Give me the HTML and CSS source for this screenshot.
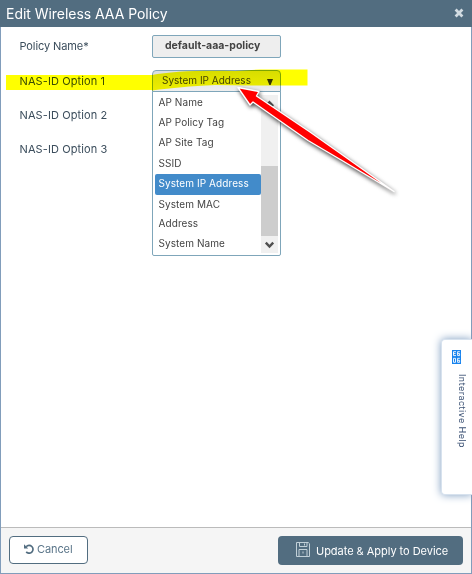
FILE: index.html
```html
<!DOCTYPE html>
<html lang="en">
<head>
<meta charset="utf-8">
<title>Edit Wireless AAA Policy</title>
<link rel="stylesheet" href="styles.css">
</head>
<body>
<div class="dialog">
  <header class="header">
    <h1 class="title">Edit Wireless AAA Policy</h1>
    <svg class="close" width="10" height="10" viewBox="0 0 10 10"><path d="M1.6 1.6 8.4 8.4M8.4 1.6 1.6 8.4"/></svg>
  </header>
  <main class="content">
    <div class="labels">
      <label class="policy-label">Policy Name*</label>
      <label>NAS-ID Option 1</label>
      <label>NAS-ID Option 2</label>
      <label>NAS-ID Option 3</label>
    </div>
    <div class="fields">
      <div class="input"><span>default-aaa-policy</span></div>
      <div class="select"><span>System IP Address</span><svg width="6" height="6" viewBox="0 0 6 6"><path d="M0 0H6L3.6 6H2.4Z"/></svg></div>
      <div class="list">
        <ul class="options">
          <li>AP Name</li>
          <li>AP Policy Tag</li>
          <li>AP Site Tag</li>
          <li>SSID</li>
          <li class="selected">System IP Address</li>
          <li class="wrapped">System MAC Address</li>
          <li class="last">System Name</li>
        </ul>
        <div class="scrollbar">
          <svg width="17" height="17" viewBox="0 0 17 17"><path d="M4.8 11 8.5 7.3 12.2 11"/></svg>
          <div class="thumb"></div>
          <svg width="17" height="17" viewBox="0 0 17 17"><path d="M4.8 6.6 8.5 10.5 12.2 6.6"/></svg>
        </div>
      </div>
    </div>
  </main>
  <footer class="footer">
    <button class="cancel">
      <svg width="10" height="10" viewBox="0 0 10 10"><path class="arc" d="M2.2 2.7A3.9 3.9 0 1 1 2.2 7.9"/><path class="head" d="M0 .3V4.4H4.2Z"/></svg>
      <span>Cancel</span>
    </button>
    <button class="apply">
      <svg width="14" height="15" viewBox="0 0 14 15"><path d="M.5.5H12.3L13.5 1.7V14.5H.5ZM3.5.5V4.5H11V.5M8.5 1.5V3.5M3 14.5V7.5H11V14.5M7 9.5V11.5"/></svg>
      <span>Update &amp; Apply to Device</span>
    </button>
  </footer>
</div>
<aside class="help">
  <svg width="9" height="14" viewBox="0 0 9 14"><path class="tile" d="M0 0H9V14H0Z"/><path class="marks" d="M4 1.7H1.5V5.6H4M1.5 3.6H3.6M7.8 1.7H5.6V5.6H7.6V3.6H5.6M1.5 8.3H3.5V12.3H1.5ZM7.8 8.3H5.6V12.3H7.6V10.3H5.6"/></svg>
  <span>Interactive Help</span>
</aside>
<svg class="marker" width="472" height="574" viewBox="0 0 472 574">
  <path d="M6 75H152V90H6ZM152 75C170 71 205 70 235 71L260 69.5H307.5V85.5H252L215 85C190 86 172 88 152 90.5Z"/>
</svg>
<svg class="arrow" width="472" height="574" viewBox="0 0 472 574">
  <path d="M238 87.5 259 91.5 256.5 96 310 132 344 156 394 191.5 342 160.5 308 140.5 253 102 250 105Z"/>
</svg>
</body>
</html>
```

FILE: styles.css
```css
* { box-sizing: border-box; }
body {
  margin: 0;
  width: 472px;
  height: 574px;
  overflow: hidden;
  position: relative;
  font: 11px Inter, "Liberation Sans", sans-serif;
  color: #3b4d5c;
  background: #fff;
}
span { white-space: nowrap; }
.dialog {
  width: 472px;
  height: 574px;
  display: flex;
  flex-direction: column;
  border: 1px solid #819dbb;
  border-top: 0;
}
.header {
  height: 27px;
  margin: 0 -1px;
  padding: 0 8px 0 6px;
  display: flex;
  align-items: center;
  justify-content: space-between;
  background: #526d80;
}
.title {
  margin: 0;
  font: 400 14px/26px Inter, sans-serif;
  letter-spacing: -.04px;
  color: #fff;
}
.close { margin-top: -1px; fill: none; stroke: #d3dce2; stroke-width: 2.8; }
.content { flex: 1; display: flex; padding: 8px 0 0 18.5px; }
.labels { width: 132.5px; display: flex; flex-direction: column; }
.labels label { height: 34px; line-height: 22px; font-size: 11px; letter-spacing: .1px; }
.labels .policy-label { height: 35px; letter-spacing: -.1px; }
.fields { width: 129px; }
.input {
  height: 23px;
  margin-bottom: 12px;
  padding-left: 12px;
  border: 1px solid #7fa6ba;
  border-radius: 2px;
  background: #eee;
  font: 700 10.5px/20px Inter, sans-serif;
  letter-spacing: 0;
  color: #444;
}
.select {
  height: 22px;
  padding: 0 7px 0 9px;
  display: flex;
  justify-content: space-between;
  border: 1px solid #7fa6ba;
  border-radius: 4px 4px 0 0;
  background: linear-gradient(#d8dde0, #eee);
  font-size: 10px;
  line-height: 18px;
  color: #444;
}
.select svg { margin-top: 8px; fill: #333; }
.list {
  height: 165px;
  margin-top: -1px;
  padding: 3px 2px 2px;
  display: flex;
  border: 1px solid #7fa6ba;
  border-radius: 0 0 2px 2px;
}
.options { width: 106px; margin: 0; padding: 0; list-style: none; }
.options li {
  height: 20.2px;
  padding-left: 3.5px;
  font-size: 10px;
  line-height: 14px;
  letter-spacing: .08px;
  color: #444;
}
.options .selected {
  height: 21px;
  margin-top: -2px;
  line-height: 19px;
  border-radius: 2px;
  background: #428bca;
  color: #fff;
}
.options .wrapped { height: 39px; padding-right: 30px; line-height: 19px; }
.options .last { line-height: 18px; }
.scrollbar {
  width: 17px;
  display: flex;
  flex-direction: column;
  justify-content: flex-end;
  background: #f0f0f0;
}
.scrollbar svg { fill: none; stroke: #505050; stroke-width: 2.4; flex: none; }
.scrollbar svg:first-child { margin-bottom: auto; }
.thumb { height: 70px; background: #cdcdcd; }
.footer {
  height: 46px;
  padding: 8px 8px 0;
  display: flex;
  justify-content: space-between;
  align-items: flex-start;
  border-top: 1px solid #bbb;
  background: #f5f5f5;
}
button {
  margin: 0;
  padding: 0;
  display: flex;
  align-items: center;
  font: 11.5px Inter, sans-serif;
  border-radius: 4px;
}
.cancel {
  width: 79px;
  height: 28px;
  padding: 0 0 2px 14px;
  gap: 3px;
  border: 1px solid #526d80;
  background: #fff;
  color: #5a7589;
  font-size: 11px;
  letter-spacing: -.1px;
}
.arc { fill: none; stroke: #526d80; stroke-width: 1.7; }
.head { fill: #526d80; }
.apply {
  width: 185px;
  height: 29px;
  padding-left: 18px;
  gap: 6px;
  border: 0;
  background: #526d80;
  color: #fff;
  font-size: 11px;
  letter-spacing: -.03px;
}
.apply svg { margin-bottom: 3px; fill: none; stroke: #c1d0d8; stroke-width: 1; }
.apply span { margin-top: 1px; }
.help {
  position: absolute;
  left: 441px;
  top: 339px;
  width: 31px;
  height: 156px;
  padding: 10px 0 0 10px;
  border: 1px solid #d7e2ee;
  border-right: 0;
  border-radius: 4px 0 0 4px;
  background: #fff;
  box-shadow: 0 0 9px #7d9cc0;
}
.help svg { display: block; }
.help span {
  display: block;
  margin: 10px 0 0 4px;
  writing-mode: vertical-rl;
  font-size: 9px;
  line-height: 12px;
  letter-spacing: .45px;
  color: #3d5375;
}
.tile { fill: #1783ee; }
.marks { fill: none; stroke: #fff; stroke-width: .9; }
.marker { position: absolute; inset: 0; mix-blend-mode: multiply; fill: #ff0; }
.arrow {
  position: absolute;
  inset: 0;
  fill: #f00;
  stroke: #fff;
  stroke-width: 1.4;
  stroke-linejoin: round;
  filter: drop-shadow(1px 2px 2px rgba(0, 0, 0, .75));
}
```
